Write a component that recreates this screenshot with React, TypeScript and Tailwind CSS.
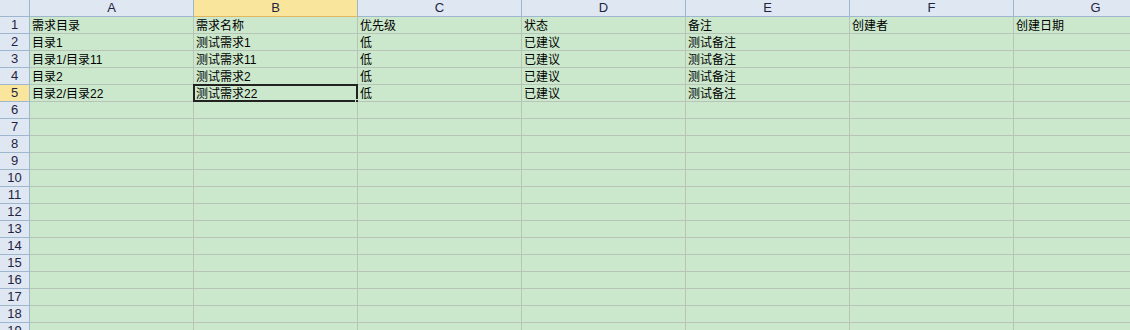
import React from "react";

const cols = ["A", "B", "C", "D", "E", "F", "G"];
const data: string[][] = [
  ["需求目录", "需求名称", "优先级", "状态", "备注", "创建者", "创建日期"],
  ["目录1", "测试需求1", "低", "已建议", "测试备注", "", ""],
  ["目录1/目录11", "测试需求11", "低", "已建议", "测试备注", "", ""],
  ["目录2", "测试需求2", "低", "已建议", "测试备注", "", ""],
  ["目录2/目录22", "测试需求22", "低", "已建议", "测试备注", "", ""],
];
const rows = Array.from({ length: 19 }, (_, i) => i + 1);
const font = { fontFamily: '"Liberation Sans", "Noto Sans CJK SC", sans-serif' };

export default function App() {
  return (
    <div className="w-[1130px] h-[330px] overflow-hidden bg-[#cce8cc]" style={font}>
      <div className="grid grid-cols-[30px_repeat(7,164px)] auto-rows-[17px] w-[1178px]">
        <div className="bg-[#dfe7f3] border-r border-b border-[#9eb6ce]" />
        {cols.map((c) => (
          <div
            key={c}
            className={
              c === "B"
                ? "flex items-center justify-center bg-[#f9e59b] border-r border-b border-r-[#9eb6ce] border-b-[#e3b85c] text-[13px] leading-[16px] text-[#1f2540]"
                : "flex items-center justify-center bg-[#dfe7f3] border-r border-b border-[#9eb6ce] text-[13px] leading-[16px] text-[#1f2540]"
            }
          >
            {c}
          </div>
        ))}
        {rows.map((r) => (
          <React.Fragment key={r}>
            <div
              className={
                r === 5
                  ? "flex items-center justify-center bg-[#f9e59b] border-r border-b border-[#9eb6ce] text-[13px] leading-[16px] text-[#1f2540]"
                  : "flex items-center justify-center bg-[#dfe7f3] border-r border-b border-[#9eb6ce] text-[13px] leading-[16px] text-[#1f2540]"
              }
            >
              {r}
            </div>
            {cols.map((c, ci) => {
              const txt = data[r - 1]?.[ci] ?? "";
              const sel = r === 5 && c === "B";
              return (
                <div
                  key={c}
                  className="relative bg-[#cce8cc] border-r border-b border-[#b8c4b8] pl-[2px] text-[12px] leading-[18px] text-black whitespace-nowrap"
                >
                  {txt}
                  {sel && (
                    <>
                      <div className="absolute left-[-1px] top-[-1px] right-[-1px] bottom-[-1px] border-2 border-[#222222] pointer-events-none" />
                      <div className="absolute right-[-3px] bottom-[-3px] w-[5px] h-[5px] bg-[#222222] border border-[#cce8cc]" />
                    </>
                  )}
                </div>
              );
            })}
          </React.Fragment>
        ))}
      </div>
    </div>
  );
}
